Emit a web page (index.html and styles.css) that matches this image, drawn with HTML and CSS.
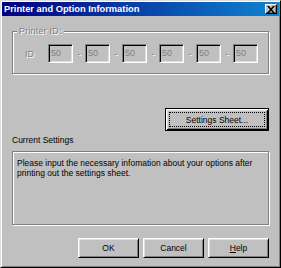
FILE: index.html
```html
<!DOCTYPE html>
<html>
<head>
<meta charset="utf-8">
<link rel="stylesheet" href="styles.css">
</head>
<body>
<div class="window">
  <div class="titlebar">
    <span class="title">Printer and Option Information</span>
    <span class="close">
      <svg width="8" height="7" viewBox="0 0 8 7"><path d="M0 0h2l2 2.2L6 0h2L5 3.5 8 7H6L4 4.8 2 7H0l3-3.5z" fill="#000"/></svg>
    </span>
  </div>
  <div class="content">
    <div class="group">
      <span class="legend disabled">Printer ID:</span>
      <div class="id-row">
        <span class="id-label disabled">ID</span>
        <span class="field">50</span><span class="sep disabled">-</span>
        <span class="field">50</span><span class="sep disabled">-</span>
        <span class="field">50</span><span class="sep disabled">-</span>
        <span class="field">50</span><span class="sep disabled">-</span>
        <span class="field">50</span><span class="sep disabled">-</span>
        <span class="field">50</span>
      </div>
    </div>
    <div class="btn default settings"><span class="focus">Settings Sheet...</span></div>
    <div class="label">Current Settings</div>
    <div class="info">Please input the necessary infomation about your options after printing out the settings sheet.</div>
    <div class="buttons">
      <div class="btn">OK</div>
      <div class="btn">Cancel</div>
      <div class="btn"><span class="u">H</span>elp</div>
    </div>
  </div>
</div>
</body>
</html>
```
FILE: styles.css
```css
html, body {
  margin: 0;
  padding: 0;
  background: #c0c0c0;
}
body {
  font-family: "Liberation Sans", Arial, sans-serif;
  font-size: 8.5px;
  color: #000;
}
.window {
  width: 281px;
  height: 268px;
  box-sizing: border-box;
  border: 1px solid;
  border-color: #dfdfdf #000 #000 #dfdfdf;
  box-shadow: inset 1px 1px 0 #fff, inset -1px -1px 0 #808080;
  padding: 1px;
  background: #c0c0c0;
  display: flex;
  flex-direction: column;
}
.titlebar {
  height: 14px;
  background: linear-gradient(90deg, #000080 0%, #1084d0 100%);
  display: flex;
  align-items: center;
  justify-content: space-between;
  padding: 0 2px 0 2px;
}
.title {
  color: #fff;
  font-weight: bold;
  font-size: 9.3px;
  line-height: 12px;
}
.close {
  width: 12px;
  height: 10px;
  box-sizing: border-box;
  background: #c0c0c0;
  border: 1px solid;
  border-color: #fff #000 #000 #fff;
  box-shadow: inset -1px -1px 0 #808080;
  display: flex;
  align-items: center;
  justify-content: center;
}
.close svg { display: block; }
.content {
  flex: 1;
  padding: 0 10px;
  display: flex;
  flex-direction: column;
}
.disabled {
  color: #808080;
  text-shadow: 1px 1px 0 #fff;
}
.group {
  position: relative;
  margin-top: 15px;
  height: 43px;
  box-sizing: border-box;
  border: 1px solid #808080;
  box-shadow: 1px 1px 0 #fff, inset 1px 1px 0 #fff;
  padding: 12px 0 0 12px;
}
.legend {
  position: absolute;
  top: -6px;
  left: 4px;
  padding: 0 2px;
  background: #c0c0c0;
  line-height: 10px;
  font-size: 9px;
  letter-spacing: 0.2px;
}
.id-row {
  display: flex;
  align-items: center;
  height: 19px;
}
.id-label {
  width: 23px;
  line-height: 10px;
  font-size: 9px;
}
.field {
  width: 25px;
  height: 19px;
  box-sizing: border-box;
  border: 1px solid;
  border-color: #808080 #fff #fff #808080;
  box-shadow: inset 1px 1px 0 #000, inset -1px -1px 0 #dfdfdf;
  color: #808080;
  font-size: 9px;
  line-height: 17px;
  padding-left: 2px;
}
.sep {
  width: 12px;
  text-align: center;
  line-height: 10px;
}
.btn {
  box-sizing: border-box;
  height: 20px;
  border: 1px solid;
  border-color: #fff #000 #000 #fff;
  box-shadow: inset 1px 1px 0 #dfdfdf, inset -1px -1px 0 #808080;
  display: flex;
  align-items: center;
  justify-content: center;
  line-height: 10px;
}
.btn.default {
  border: 1px solid #000;
  box-shadow: inset 1px 1px 0 #fff, inset -1px -1px 0 #000, inset 2px 2px 0 #dfdfdf, inset -2px -2px 0 #808080;
  padding: 3px;
}
.settings {
  align-self: flex-end;
  width: 104px;
  height: 23px;
  margin-top: 34px;
}
.focus {
  flex: 1;
  align-self: stretch;
  border: 1px dotted #000;
  display: flex;
  align-items: center;
  justify-content: center;
}
.label {
  margin-top: 4px;
  line-height: 10px;
}
.info {
  margin-top: 6px;
  height: 74px;
  box-sizing: border-box;
  border: 1px solid #808080;
  box-shadow: 1px 1px 0 #fff, inset 1px 1px 0 #fff;
  padding: 6px 4px 0 4px;
  line-height: 10px;
}
.buttons {
  margin-top: 13px;
  display: flex;
  justify-content: flex-end;
  gap: 4px;
}
.buttons .btn {
  width: 61px;
}
.u { text-decoration: underline; }
```
